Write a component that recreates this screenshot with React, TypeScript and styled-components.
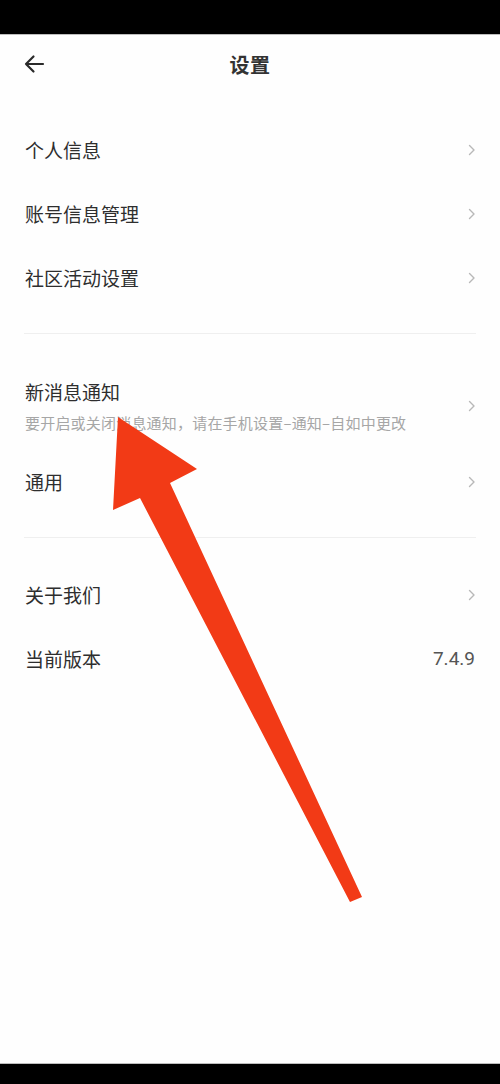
import React from "react";
import styled, { createGlobalStyle } from "styled-components";

const GlobalStyle = createGlobalStyle`
  html, body { margin: 0; padding: 0; background: #ffffff; }
  body { font-family: "Noto Sans CJK SC", "Noto Sans", sans-serif; }
  * { box-sizing: border-box; }
`;

const Screen = styled.div`
  position: relative;
  width: 500px;
  height: 1084px;
  display: flex;
  flex-direction: column;
  background: #fefefe;
  overflow: hidden;
`;

const StatusBar = styled.div`
  height: 35px;
  flex: none;
  background: #000;
  border-bottom: 1px solid #bdbdbd;
`;

const Header = styled.header`
  height: 58px;
  flex: none;
  display: flex;
  align-items: center;
  justify-content: center;
  position: relative;
  padding: 0 24px;
`;

const BackButton = styled.button`
  position: absolute;
  left: 22px;
  top: 50%;
  transform: translateY(-50%);
  border: 0;
  background: none;
  padding: 0;
  width: 24px;
  height: 24px;
  display: flex;
  align-items: center;
  justify-content: center;
  color: #2a2a2a;
`;

const Title = styled.h1`
  margin: 0;
  font-size: 20px;
  font-weight: 700;
  color: #333;
  letter-spacing: 0.5px;
`;

const Content = styled.main`
  flex: 1;
  display: flex;
  flex-direction: column;
`;

const Section = styled.section<{ $divided?: boolean }>`
  padding: 24px 0;
  margin: 0 24px;
  border-top: ${(p) => (p.$divided ? "1px solid #efefef" : "none")};
`;

const Row = styled.div<{ $tall?: boolean }>`
  height: ${(p) => (p.$tall ? "91px" : "64px")};
  display: flex;
  align-items: center;
  justify-content: space-between;
  padding-top: ${(p) => (p.$tall ? "4px" : "1px")};
`;

const TextCol = styled.div`
  display: flex;
  flex-direction: column;
  padding-left: 1px;
`;

const Label = styled.span`
  font-size: 19px;
  color: #2e2e2e;
  line-height: 1;
`;

const Sub = styled.span`
  margin-top: 14px;
  font-size: 15px;
  color: #a6a6a6;
  line-height: 1;
  letter-spacing: 0.2px;
  white-space: nowrap;
`;

const Value = styled.span`
  font-size: 19px;
  color: #555;
  line-height: 1;
  font-family: "Roboto", "Noto Sans", sans-serif;
  margin-right: 1px;
`;

const ChevronWrap = styled.span`
  display: flex;
  align-items: center;
  color: #b8b8b8;
`;

const BottomBar = styled.div`
  height: 21px;
  flex: none;
  background: #000;
  border-top: 1px solid #bdbdbd;
`;

const Overlay = styled.svg`
  position: absolute;
  left: 0;
  top: 0;
  pointer-events: none;
`;

const Chevron = () => (
  <ChevronWrap>
    <svg width="8" height="12" viewBox="0 0 8 12" fill="none">
      <path d="M1.5 1.5 L6 6 L1.5 10.5" stroke="currentColor" strokeWidth="1.4" strokeLinecap="round" strokeLinejoin="round" />
    </svg>
  </ChevronWrap>
);

type Item = { label: string; sub?: string; value?: string };

const sections: Item[][] = [
  [{ label: "个人信息" }, { label: "账号信息管理" }, { label: "社区活动设置" }],
  [
    { label: "新消息通知", sub: "要开启或关闭消息通知，请在手机设置–通知–自如中更改" },
    { label: "通用" },
  ],
  [{ label: "关于我们" }, { label: "当前版本", value: "7.4.9" }],
];

export default function App() {
  return (
    <>
      <GlobalStyle />
      <Screen>
        <StatusBar />
        <Header>
          <BackButton aria-label="返回">
            <svg width="22" height="20" viewBox="0 0 22 20" fill="none">
              <path d="M20 10 H3 M10.5 2.5 L3 10 L10.5 17.5" stroke="currentColor" strokeWidth="2.2" strokeLinecap="round" strokeLinejoin="round" />
            </svg>
          </BackButton>
          <Title>设置</Title>
        </Header>
        <Content>
          {sections.map((items, si) => (
            <Section key={si} $divided={si > 0}>
              {items.map((it) => (
                <Row key={it.label} $tall={!!it.sub}>
                  <TextCol>
                    <Label>{it.label}</Label>
                    {it.sub && <Sub>{it.sub}</Sub>}
                  </TextCol>
                  {it.value ? <Value>{it.value}</Value> : <Chevron />}
                </Row>
              ))}
            </Section>
          ))}
        </Content>
        <BottomBar />
        <Overlay width="500" height="1084" viewBox="0 0 500 1084">
          <polygon
            points="118,417 197,469 170,483 362,897 350,902 140,498 113,510"
            fill="#f23a16"
          />
        </Overlay>
      </Screen>
    </>
  );
}
